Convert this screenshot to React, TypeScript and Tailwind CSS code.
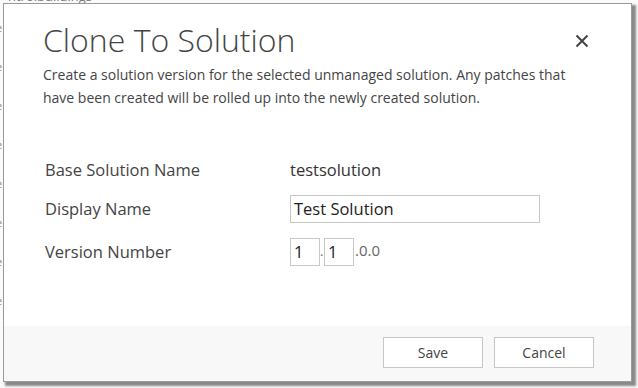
import React from "react";

export default function App() {
  const font = { fontFamily: '"Open Sans", "Noto Sans", "Liberation Sans", sans-serif' };
  return (
    <div className="w-[638px] h-[388px] bg-[#fafafa] overflow-hidden relative" style={font}>
      {/* background page text peeking out */}
      <div className="absolute left-[8px] top-[-10px] text-[13px] text-[#777] leading-[13px]">ntrolbuildings</div>
      <div className="absolute left-[-4px] top-[22px] flex flex-col gap-[27px] text-[11px] text-[#888] leading-[12px]">
        <span>e</span><span>e</span><span>e</span><span>e</span><span>e</span><span>e</span><span>e</span><span>e</span>
      </div>
      {/* dialog */}
      <div className="absolute left-[3px] top-[3px] w-[629px] h-[379px] border border-[#9a9a9a] bg-white shadow-[3px_3px_2px_1px_rgba(0,0,0,0.45)] flex flex-col">
        <div className="flex-1 flex flex-col pl-[39px] pr-[40px]">
          <div className="flex items-start justify-between">
            <h1 className="text-[32px] font-light text-[#444] leading-[40px] mt-[16px]">Clone To Solution</h1>
            <svg width="14" height="14" viewBox="0 0 14 14" className="mt-[30px] mr-[2px]">
              <path d="M1.5 1.5 L12.5 12.5 M12.5 1.5 L1.5 12.5" stroke="#444" strokeWidth="2" />
            </svg>
          </div>
          <p className="text-[14px] text-[#444] leading-[23px] mt-[3px] max-w-[540px]">
            Create a solution version for the selected unmanaged solution. Any patches that have been created will be rolled up into the newly created solution.
          </p>
          <div className="mt-[48px] flex flex-col text-[16.5px] text-[#444]">
            <div className="flex items-center h-[26px]">
              <div className="w-[247px] pl-[2px]">Base Solution Name</div>
              <div className="text-[#333]">testsolution</div>
            </div>
            <div className="flex items-center h-[28px] mt-[12px]">
              <div className="w-[247px] pl-[2px]">Display Name</div>
              <div className="w-[250px] h-[28px] border border-[#c8c8c8] flex items-center pl-[3px] text-[#222]">Test Solution</div>
            </div>
            <div className="flex items-center h-[28px] mt-[15px]">
              <div className="w-[247px] pl-[2px]">Version Number</div>
              <div className="w-[30px] h-[28px] border border-[#c8c8c8] flex items-center pl-[3px] text-[#222]">1</div>
              <div className="w-[4px] text-[#666] text-[13px]">.</div>
              <div className="w-[30px] h-[28px] border border-[#c8c8c8] flex items-center pl-[3px] text-[#222]">1</div>
              <div className="text-[#666] text-[15px] ml-[1px] -mt-[4px]">.0.0</div>
            </div>
          </div>
        </div>
        <div className="h-[55px] bg-[#f8f8f8] flex items-start justify-end gap-[11px] pr-[37px] pt-[11px]">
          <button className="w-[100px] h-[31px] border border-[#c6c6c6] bg-white text-[14px] text-[#444]">Save</button>
          <button className="w-[100px] h-[31px] border border-[#c6c6c6] bg-white text-[14px] text-[#444]">Cancel</button>
        </div>
      </div>
    </div>
  );
}
